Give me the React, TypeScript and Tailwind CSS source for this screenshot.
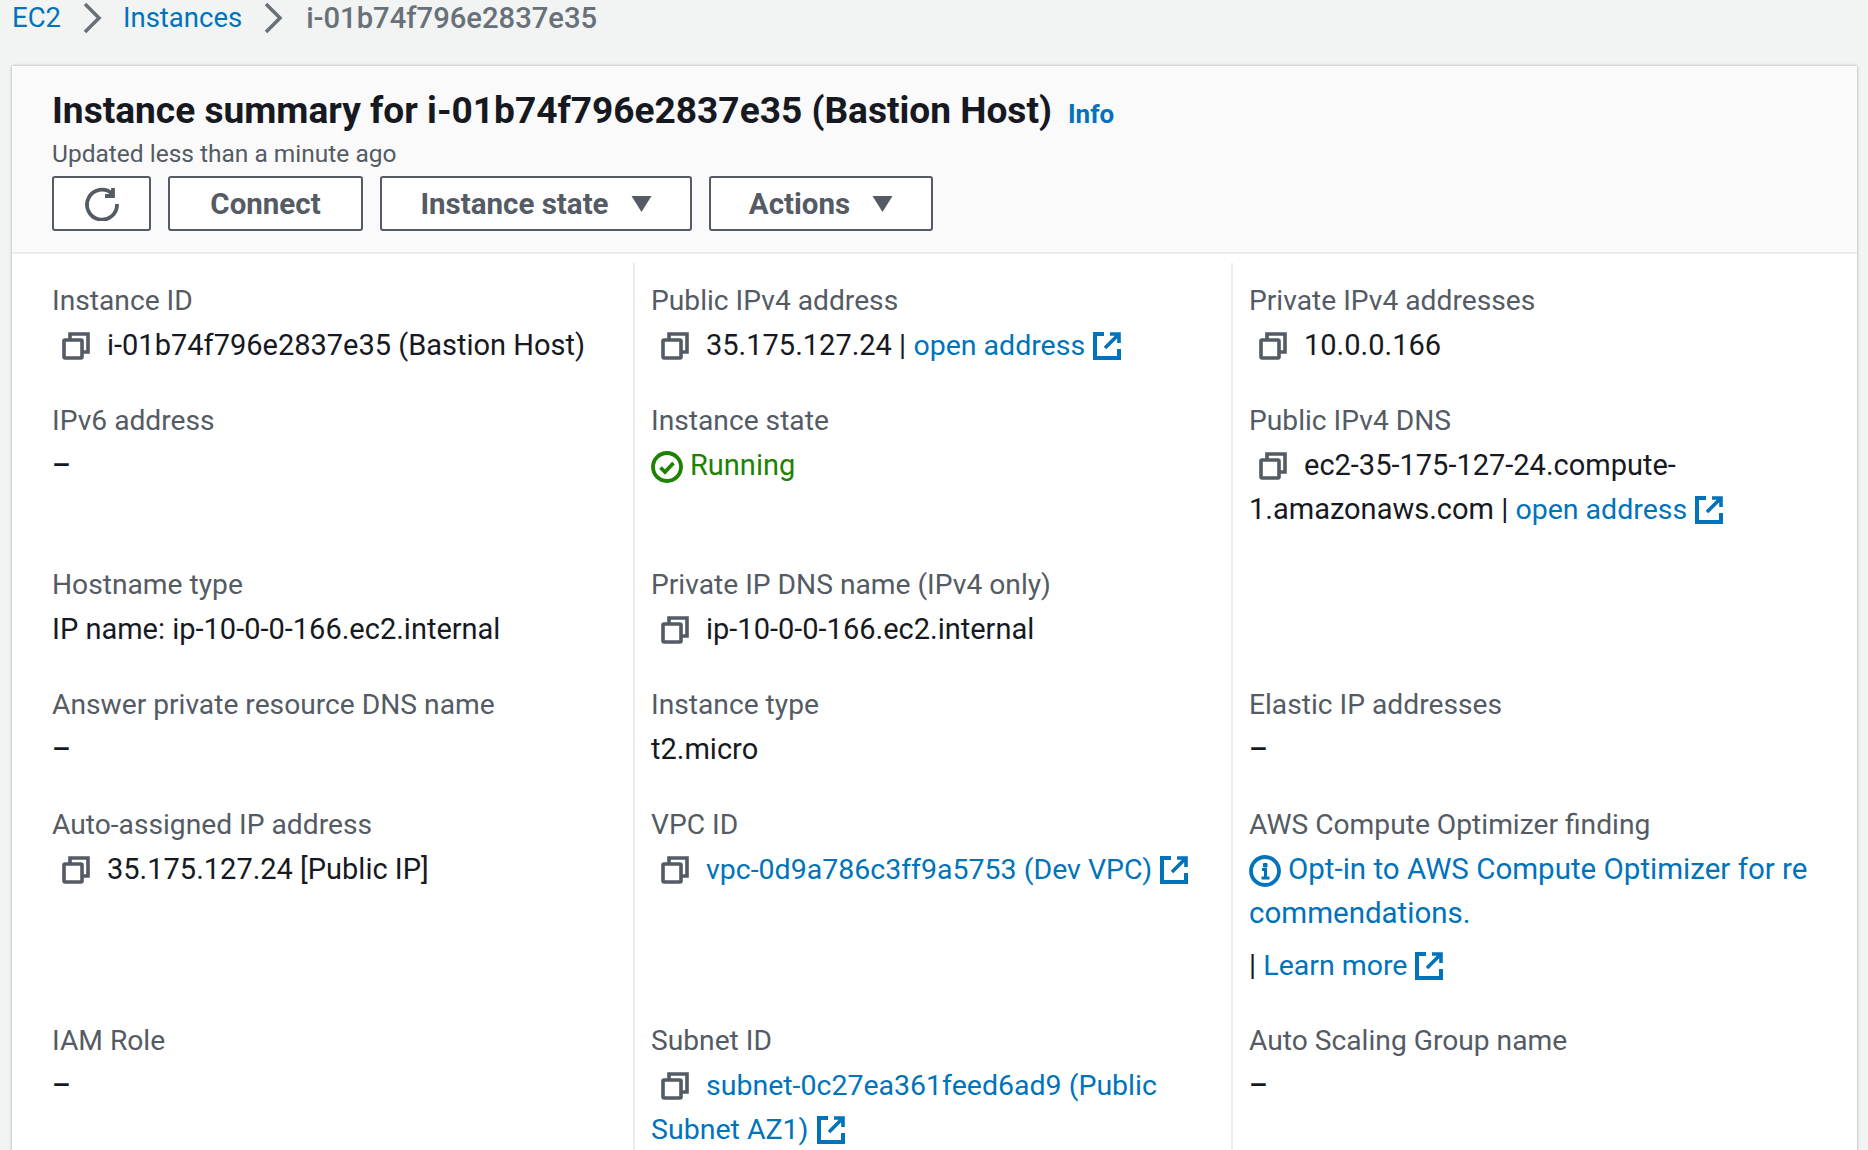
import React from "react";

const CopyIcon = () => (
  <svg viewBox="0 0 28 28" className="inline-block w-[28px] h-[28px] -mt-[8px] mr-[17px] ml-[10px] align-[-5px]" fill="none" stroke="#545b64" strokeWidth="3.6">
    <rect x="2" y="8" width="18" height="18" rx="1" />
    <path d="M8 8V2h18v18h-6" />
  </svg>
);

const ExtIcon = () => (
  <svg viewBox="0 0 28 28" className="inline-block w-[28px] h-[28px] -mt-[8px] ml-[8px] align-[-5px]" fill="none" stroke="#0073bb" strokeWidth="4">
    <path d="M11 2H2v24h24V17" />
    <path d="M12 16 26 2M17 2h9v9" strokeWidth="3.6" />
  </svg>
);

const Link = ({ children, ext }: { children: React.ReactNode; ext?: boolean }) => (
  <span className="text-[#0073bb] text-[28.5px] leading-[40px]">
    {children}
    {ext && <ExtIcon />}
  </span>
);

const Dash = () => <span className="font-medium">–</span>;

const fields: { label: string; value: React.ReactNode }[] = [
  { label: "Instance ID", value: <><CopyIcon />i-01b74f796e2837e35 (Bastion Host)</> },
  { label: "Public IPv4 address", value: <><CopyIcon />35.175.127.24 | <Link ext>open address</Link></> },
  { label: "Private IPv4 addresses", value: <><CopyIcon />10.0.0.166</> },
  { label: "IPv6 address", value: <Dash /> },
  {
    label: "Instance state",
    value: (
      <span className="text-[#1d8102]">
        <svg viewBox="0 0 32 32" className="inline-block w-[32px] h-[32px] -mt-[8px] mr-[7px] align-[-8px]" fill="none" stroke="#1d8102" strokeWidth="3.8">
          <circle cx="16" cy="16" r="14" />
          <path d="M9.5 16.5 14 21l8.5-9" />
        </svg>
        Running
      </span>
    ),
  },
  { label: "Public IPv4 DNS", value: <><CopyIcon />ec2-35-175-127-24.compute-<br />1.amazonaws.com | <Link ext>open address</Link></> },
  { label: "Hostname type", value: "IP name: ip-10-0-0-166.ec2.internal" },
  { label: "Private IP DNS name (IPv4 only)", value: <><CopyIcon />ip-10-0-0-166.ec2.internal</> },
  { label: "", value: null },
  { label: "Answer private resource DNS name", value: <Dash /> },
  { label: "Instance type", value: "t2.micro" },
  { label: "Elastic IP addresses", value: <Dash /> },
  { label: "Auto-assigned IP address", value: <><CopyIcon />35.175.127.24 [Public IP]</> },
  { label: "VPC ID", value: <><CopyIcon /><Link ext>vpc-0d9a786c3ff9a5753 (Dev VPC)</Link></> },
  {
    label: "AWS Compute Optimizer finding",
    value: (
      <>
        <span className="text-[#0073bb] text-[29.5px] leading-[40px]">
          <svg viewBox="0 0 32 32" className="inline-block w-[32px] h-[32px] -mt-[8px] mr-[7px] align-[-8px]" fill="none" stroke="#0073bb" strokeWidth="3.8">
            <circle cx="16" cy="16" r="14" />
            <path d="M13 14.5h3.5V23M12.5 23h8" strokeWidth="3" />
            <path d="M14.5 8.5h3.5v3.5h-3.5z" fill="#0073bb" strokeWidth="1" />
          </svg>
          Opt-in to AWS Compute Optimizer for re
          <br />
          commendations.
        </span>
        <div className="mt-[8px]">
          | <Link ext>Learn more</Link>
        </div>
      </>
    ),
  },
  { label: "IAM Role", value: <Dash /> },
  { label: "Subnet ID", value: <><CopyIcon /><Link>subnet-0c27ea361feed6ad9 (Public<br />Subnet AZ1)</Link><ExtIcon /></> },
  { label: "Auto Scaling Group name", value: <Dash /> },
];

const Button = ({ children, className = "" }: { children: React.ReactNode; className?: string }) => (
  <button className={`h-[55px] flex items-center justify-center border-2 border-[#545b64] rounded-[3px] text-[#545b64] font-bold bg-white text-[29.5px] ${className}`}>
    {children}
  </button>
);

const Caret = () => (
  <svg viewBox="0 0 20 16" className="w-[21px] h-[16px] ml-[22px]">
    <path d="M0 0h20L10 16z" fill="#545b64" />
  </svg>
);

const Crumb = () => (
  <svg viewBox="0 0 20 32" className="w-[20px] h-[32px] mx-[21px]" fill="none" stroke="#687078" strokeWidth="3.6">
    <path d="M3 2l14 14L3 30" />
  </svg>
);

export default function App() {
  return (
    <div className="w-[1868px] h-[1150px] overflow-hidden bg-[#f2f3f3] text-[28.2px] leading-[44px] font-['Roboto',sans-serif]">
      <div className="flex items-center h-[36px] mb-[30px] pl-[12px] text-[27.5px]">
        <span className="text-[#0073bb]">EC2</span>
        <Crumb />
        <span className="text-[#0073bb]">Instances</span>
        <Crumb />
        <span className="text-[#687078] font-medium text-[29.2px] ml-[2px]">i-01b74f796e2837e35</span>
      </div>

      <div className="ml-[12px] mr-[11px] bg-white shadow-[0_0_3px_rgba(0,28,36,0.35)] h-[1100px]">
        <div className="bg-[#fafafa] border-b-2 border-[#eaeded] h-[188px] pt-[23px] pl-[40px]">
          <div className="flex items-baseline">
            <h1 className="text-[37.1px] font-bold text-[#16191f]">Instance summary for i-01b74f796e2837e35 (Bastion Host)</h1>
            <span className="ml-[16px] text-[26px] font-bold text-[#0073bb]">Info</span>
          </div>
          <div className="text-[#545b64] text-[24.5px] leading-[35px]">Updated less than a minute ago</div>
          <div className="flex gap-[17px] mt-[5px]">
            <Button className="w-[99px]">
              <svg viewBox="0 0 34 34" className="w-[34px] h-[34px]" fill="none" stroke="#545b64" strokeWidth="3.8">
                <path d="M27 6.5A15 15 0 1 0 32 17" />
                <path d="M28 1v8h-8" />
              </svg>
            </Button>
            <Button className="w-[195px]">Connect</Button>
            <Button className="w-[312px]">Instance state<Caret /></Button>
            <Button className="w-[224px]">Actions<Caret /></Button>
          </div>
        </div>

        <div className="grid grid-cols-[621px_598px_1fr] mt-[9px] text-[#16191f]">
          {fields.map((f, i) => (
            <div key={i} className={`pb-[32px] pr-[20px] ${i % 3 === 0 ? "pl-[40px]" : "pl-[16px] border-l-2 border-[#eaeded]"} ${i < 3 ? "pt-[16px]" : ""}`}>
              <div className="text-[#545b64]">{f.label}</div>
              <div className="text-[29px]">{f.value}</div>
            </div>
          ))}
        </div>
      </div>
    </div>
  );
}
